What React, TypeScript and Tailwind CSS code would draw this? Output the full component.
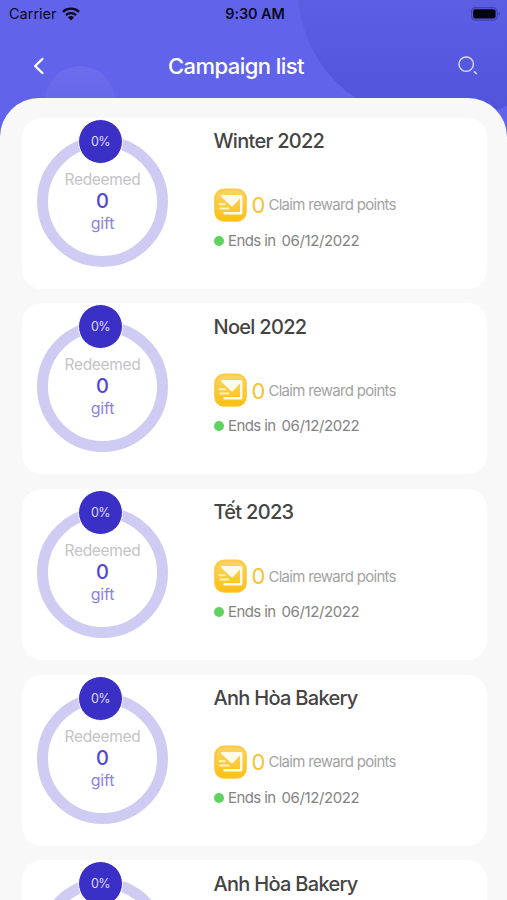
import React from 'react';

interface Campaign {
  id: number;
  name: string;
  percent: number;
  redeemed: number;
  points: number;
  endDate: string;
}

const campaigns: Campaign[] = [
  { id: 1, name: 'Winter 2022', percent: 0, redeemed: 0, points: 0, endDate: '06/12/2022' },
  { id: 2, name: 'Noel 2022', percent: 0, redeemed: 0, points: 0, endDate: '06/12/2022' },
  { id: 3, name: 'Tết 2023', percent: 0, redeemed: 0, points: 0, endDate: '06/12/2022' },
  { id: 4, name: 'Anh Hòa Bakery', percent: 0, redeemed: 0, points: 0, endDate: '06/12/2022' },
  { id: 5, name: 'Anh Hòa Bakery', percent: 0, redeemed: 0, points: 0, endDate: '06/12/2022' },
];

const WifiIcon = () => (
  <svg className="w-[18px] h-[14px]" viewBox="0 0 18 14" fill="none" stroke="#0b0b1e">
    <path strokeWidth="2.4" d="M0.9 4.8C5.3 0.6 12.7 0.6 17.1 4.8" />
    <path strokeWidth="2.3" d="M3.9 8.2C6.7 5.5 11.3 5.5 14.1 8.2" />
    <path fill="#0b0b1e" stroke="none" d="M9 13.4L5.9 10.3C7.6 8.7 10.4 8.7 12.1 10.3Z" />
  </svg>
);

const BatteryIcon = () => (
  <svg className="w-[30px] h-[14px]" viewBox="0 0 30 14">
    <rect x="0.6" y="0.6" width="25.6" height="12.6" rx="4" fill="none" stroke="#4240b4" strokeWidth="1.2" />
    <rect x="2.2" y="2.3" width="22.4" height="9.3" rx="2" fill="#050510" />
    <path d="M27.6 5c1.7.5 1.7 3.4 0 3.9z" fill="#4240b4" />
  </svg>
);

const BackIcon = () => (
  <svg className="w-[12px] h-[18px]" viewBox="0 0 12 18" fill="none" stroke="#fff" strokeWidth="2.4" strokeLinecap="round" strokeLinejoin="round">
    <path d="M9.4 2L2.2 9L9.4 16" />
  </svg>
);

const SearchIcon = () => (
  <svg className="w-[20px] h-[20px]" viewBox="0 0 20 20" fill="none" stroke="#dcdcfb">
    <circle cx="8.2" cy="8.2" r="7.2" strokeWidth="1.4" />
    <path d="M16 15.4L18.8 18" strokeWidth="1.6" />
  </svg>
);

const RewardIcon = () => (
  <svg className="w-[33px] h-[34px]" viewBox="0 0 33 34">
    <defs>
      <linearGradient id="rewardFill" x1="0" y1="0" x2="0" y2="1">
        <stop offset="0" stopColor="#fdd568" />
        <stop offset="1" stopColor="#fcc011" />
      </linearGradient>
    </defs>
    <rect x="0.3" y="0.6" width="32.4" height="33" rx="9.5" fill="url(#rewardFill)" />
    <rect x="1.3" y="1.6" width="30.4" height="31" rx="8.8" fill="none" stroke="#fbc32a" strokeWidth="1.6" opacity="0.6" />
    <path d="M8 8H26.8L18 17.6Z" fill="#fffbe9" stroke="#fffbe9" strokeWidth="2" strokeLinejoin="round" />
    <path d="M27.2 8.6V25.2H10.5" fill="none" stroke="#fffbe9" strokeWidth="2.4" strokeLinejoin="round" strokeLinecap="round" />
    <path d="M5.6 16.2H10.8M6.4 20.4H14.4" stroke="#fff3c8" strokeWidth="2" strokeLinecap="round" />
  </svg>
);

const StatusBar = () => (
  <div className="grid grid-cols-3 items-center h-[27px] pl-[9px] pr-[6px] text-[#0b0b1e]">
    <div className="flex items-center gap-[5px]">
      <span className="text-[14.5px]">Carrier</span>
      <WifiIcon />
    </div>
    <span className="text-center text-[14.5px] font-semibold tracking-[-0.1px] whitespace-nowrap">9:30 AM</span>
    <div className="flex justify-end">
      <BatteryIcon />
    </div>
  </div>
);

const Header = () => (
  <header className="relative h-[138px] overflow-hidden bg-[#6164ea]">
    <div className="absolute left-[298px] top-[-140px] w-[280px] h-[260px] rounded-full bg-linear-to-b from-[#5d5fe3] from-50% to-[#5053db]" />
    <div className="absolute left-[45px] top-[66px] w-[70px] h-[70px] rounded-full bg-linear-to-b from-[#6b6dec] to-[#6164ea]" />
    <div className="relative">
      <StatusBar />
      <div className="flex items-center h-[78px] pl-[33px] pr-[29px]">
        <button aria-label="Back">
          <BackIcon />
        </button>
        <h1 className="ml-[123px] text-[22px] font-medium tracking-[-0.55px] text-white">Campaign list</h1>
        <button aria-label="Search" className="ml-auto">
          <SearchIcon />
        </button>
      </div>
    </div>
  </header>
);

const ProgressRing: React.FC<Pick<Campaign, 'percent' | 'redeemed'>> = ({ percent, redeemed }) => (
  <div className="relative w-[131px] h-[131px] rounded-full border-[11px] border-[#cfccf3] flex flex-col items-center pt-[23px]">
    <span className="text-[15.5px] leading-[20px] tracking-[-0.3px] text-[#c4c4c4]">Redeemed</span>
    <span className="text-[20px] leading-[22px] font-medium text-[#5046d6]">{redeemed}</span>
    <span className="text-[16px] leading-[23px] tracking-[-0.2px] text-[#8b83e3]">gift</span>
    <div className="absolute left-[30px] top-[-28px] w-[45px] h-[45px] rounded-full border-[1.5px] border-white bg-[#3a30c6] flex items-center justify-center pt-[2px] text-[12.5px] tracking-[-0.5px] text-[#dedcff]">
      {percent}%
    </div>
  </div>
);

const CampaignCard: React.FC<{ campaign: Campaign }> = ({ campaign }) => (
  <li className="flex h-[171px] shrink-0 rounded-[20px] bg-white pl-[15px]">
    <div className="pt-[18px]">
      <ProgressRing percent={campaign.percent} redeemed={campaign.redeemed} />
    </div>
    <div className="ml-[45.5px] pt-[9.5px]">
      <h2 className="text-[20px] leading-[28px] font-medium tracking-[-0.7px] text-[#444]">{campaign.name}</h2>
      <div className="mt-[32.5px] flex items-center h-[34px]">
        <RewardIcon />
        <span className="ml-[5px] mt-[2px] text-[22px] text-[#fbc02d]">{campaign.points}</span>
        <span className="ml-[3px] mt-[2px] text-[15px] tracking-[-0.7px] text-[#a3a3a3]">Claim reward points</span>
      </div>
      <div className="mt-[9px] flex items-center h-[20px] text-[15px] text-[#838383]">
        <span className="w-[10px] h-[10px] rounded-full bg-[#5fd25f]" />
        <span className="ml-[4.5px] mt-[1px] tracking-[-0.6px]">Ends in</span>
        <span className="ml-[6px] mt-[1px] tracking-[-0.4px]">{campaign.endDate}</span>
      </div>
    </div>
  </li>
);

const App: React.FC = () => (
  <div className="w-[507px] h-[900px] overflow-hidden bg-[#f8f8f9] font-['Inter','Liberation_Sans',sans-serif]">
    <Header />
    <main className="relative -mt-[40.5px] h-[803px] rounded-t-[39px] bg-[#f8f8f9] pl-[22px] pr-[20.5px] pt-[20px] overflow-hidden">
      <ul className="flex flex-col gap-[14.7px]">
        {campaigns.map(campaign => (
          <CampaignCard key={campaign.id} campaign={campaign} />
        ))}
      </ul>
    </main>
  </div>
);

export default App;
